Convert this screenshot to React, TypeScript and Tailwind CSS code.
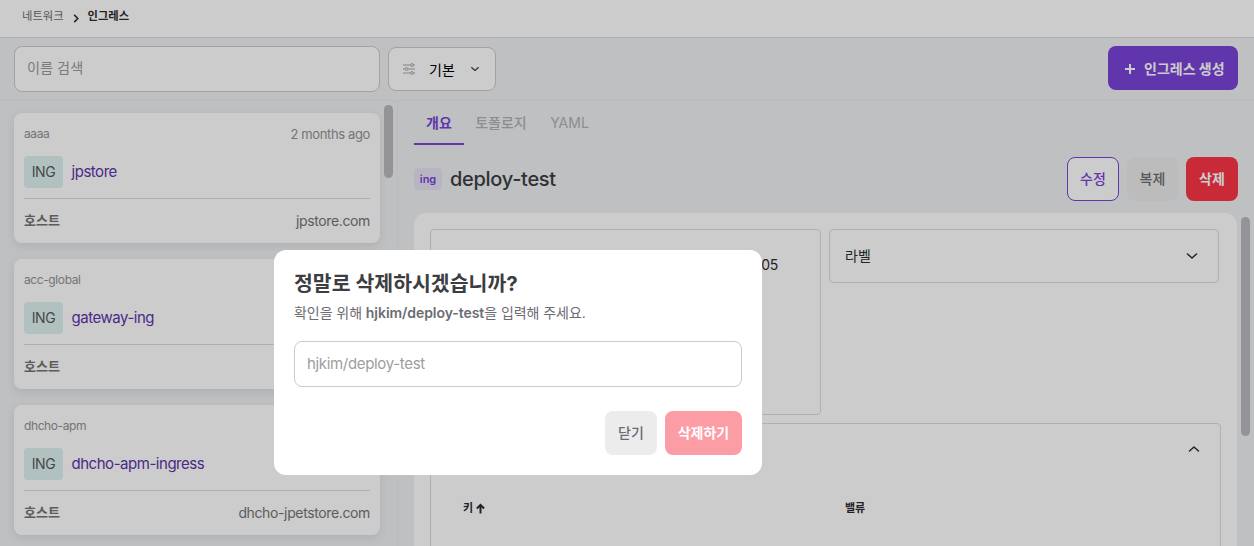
import React from "react";

const ingresses = [
  { namespace: "aaaa", age: "2 months ago", name: "jpstore", host: "jpstore.com" },
  { namespace: "acc-global", age: "", name: "gateway-ing", host: "" },
  { namespace: "dhcho-apm", age: "", name: "dhcho-apm-ingress", host: "dhcho-jpetstore.com" },
];

function Chevron({ className = "" }: { className?: string }) {
  return (
    <svg viewBox="0 0 12 8" className={className} fill="none" stroke="currentColor" strokeWidth="1.5" strokeLinecap="round" strokeLinejoin="round">
      <path d="M1.5 2 L6 6 L10.5 2" />
    </svg>
  );
}

function SlidersIcon() {
  return (
    <svg viewBox="0 0 12 12" className="h-3 w-3 text-[#a8a8ac]" fill="none" stroke="currentColor" strokeWidth="1">
      <path d="M0 2h7.5M10.5 2H12M0 6h2M5 6h7M0 10h7.5M10.5 10H12" />
      <circle cx="9" cy="2" r="1.4" />
      <circle cx="3.5" cy="6" r="1.4" />
      <circle cx="9" cy="10" r="1.4" />
    </svg>
  );
}

function IngressCard({ item }: { item: (typeof ingresses)[number] }) {
  return (
    <article className="h-[130px] w-[366px] shrink-0 rounded-lg bg-white px-2.5 shadow-[0_3px_8px_rgba(60,80,70,0.12)]">
      <div className="flex h-[43px] items-center justify-between text-[#929292]">
        <span className="pb-px text-[12px] tracking-[-0.4px]">{item.namespace}</span>
        <span className="text-[13px] tracking-[-0.37px]">{item.age}</span>
      </div>
      <div className="flex h-8 items-center">
        <span className="flex h-8 w-[39px] items-center justify-center rounded bg-[#def2f1] pb-px text-[14px] tracking-[-0.5px] text-[#58595d]">ING</span>
        <span className="ml-[8.5px] text-[15px] tracking-[-0.47px] text-[#6033aa]">{item.name}</span>
      </div>
      <div className="mt-2.5 flex h-[45px] items-center justify-between border-t border-[#dcdcdc] text-[14px] text-[#747474]">
        <span className="text-[13px] font-bold">호스트</span>
        <span className="pb-px tracking-[-0.37px]">{item.host}</span>
      </div>
    </article>
  );
}

function DeleteDialog() {
  return (
    <div className="fixed inset-0 bg-black/20">
      <section role="dialog" className="absolute top-[250px] left-[274px] flex h-[225px] w-[488px] flex-col rounded-xl bg-white px-5 pt-5">
        <h2 className="h-7 text-[20.5px] leading-7 font-bold text-[#3d3d42]">정말로 삭제하시겠습니까?</h2>
        <p className="mt-[5px] h-5 text-[14px] leading-5 tracking-[-0.06px] text-[#6c6c72]">
          확인을 위해 <b className="font-semibold">hjkim/deploy-test</b>을 입력해 주세요.
        </p>
        <input className="mt-[18px] h-[46px] w-full rounded-lg border border-[#cbcbcf] px-3 pb-0.5 text-[15px] tracking-[-0.33px] outline-none placeholder:text-[#9e9e9e]" placeholder="hjkim/deploy-test" />
        <div className="mt-6 flex justify-end gap-2 text-[14px]">
          <button className="h-11 w-[52px] rounded-lg bg-[#ececec] pb-0.5 font-medium text-[#6c6c72]">닫기</button>
          <button className="h-11 w-[77px] rounded-lg bg-[#fc9ca4] pb-0.5 font-bold text-white">삭제하기</button>
        </div>
      </section>
    </div>
  );
}

export default function App() {
  return (
    <div className="flex h-[546px] w-[1254px] flex-col overflow-hidden bg-[#eff0f3] font-['Inter','Noto_Sans_CJK_KR',sans-serif] text-[#2c2c30]">
      <header className="flex h-[38px] shrink-0 items-center border-b border-[#dcdde0] bg-white px-[22px] pb-[5px] text-[11.3px]">
        <span className="text-[#6c6c72]">네트워크</span>
        <svg viewBox="0 0 6 10" className="mt-1 ml-[9px] h-[9px] w-[6px]" fill="none" stroke="currentColor" strokeWidth="1.7">
          <path d="M1 1 L5 5 L1 9" />
        </svg>
        <span className="ml-[9px] font-bold">인그레스</span>
      </header>

      <div className="flex h-[63px] shrink-0 items-start border-b border-[#e9eaec] pt-2 pr-4 pl-3.5">
        <input className="h-[46px] w-[366px] rounded-lg border border-[#cbcbcf] bg-white px-3 pb-[3px] text-[14.2px] outline-none placeholder:text-[#9a9a9e]" placeholder="이름 검색" />
        <button className="mt-px ml-2 flex h-11 w-[108px] items-center rounded-lg border border-[#cbcbcf] bg-white px-3.5 text-[14px] text-black">
          <SlidersIcon />
          <span className="ml-3.5">기본</span>
          <Chevron className="mr-px ml-auto h-[6px] w-[10px] text-[#3d3d42]" />
        </button>
        <button className="ml-auto flex h-11 w-[130px] items-center rounded-lg bg-[#7a43d6] pl-[17px] text-[14px] font-bold text-white">
          <svg viewBox="0 0 10 10" className="mt-px mr-[9px] h-2.5 w-2.5" stroke="currentColor" strokeWidth="2">
            <path d="M5 0v10M0 5h10" />
          </svg>
          인그레스 생성
        </button>
      </div>

      <main className="flex min-h-0 flex-1">
        <aside className="flex w-[398px] shrink-0 items-start overflow-hidden border-r border-[#e9eaec] pl-3.5">
          <div className="flex flex-col gap-4 pt-3">
            {ingresses.map((item) => (
              <IngressCard key={item.name} item={item} />
            ))}
          </div>
          <div className="mt-1 ml-1 h-[73px] w-[9px] rounded-full bg-[#b9b9bf]" />
        </aside>

        <section className="flex min-w-0 flex-1 flex-col pl-4">
          <nav className="flex h-11 shrink-0 text-[14px] text-[#b0b1b4]">
            <span className="flex w-[50px] items-center justify-center border-b-2 border-[#7a43d6] font-bold text-[#7a43d6]">개요</span>
            <span className="flex w-[74px] items-center justify-center border-b-2 border-transparent font-medium">토폴로지</span>
            <span className="flex w-[63px] items-center justify-center border-b-2 border-transparent">YAML</span>
          </nav>
          <div className="mt-3 flex h-11 shrink-0 items-center pr-4">
            <span className="flex h-[22px] w-7 items-center justify-center rounded-sm bg-[#e8e1f3] text-[11px] font-semibold text-[#7a43d6]">ing</span>
            <h1 className="ml-2 text-[20px] font-medium tracking-[-0.3px] text-[#3d3d42]">deploy-test</h1>
            <div className="ml-auto flex gap-2 text-[14px]">
              <button className="h-11 w-[52px] rounded-lg border border-[#7a43d6] bg-white pb-0.5 font-medium text-[#7a43d6]">수정</button>
              <button className="h-11 w-[51px] rounded-lg bg-[#ebebeb] pb-0.5 font-medium text-[#6c6c72]">복제</button>
              <button className="h-11 w-[52px] rounded-lg bg-[#fa3645] pb-0.5 font-bold text-white">삭제</button>
            </div>
          </div>
          <div className="mt-3 flex min-h-0 flex-1 items-start">
            <div className="h-[333px] w-[823px] shrink-0 overflow-hidden rounded-t-xl bg-white px-4 pt-4">
              <div className="flex items-start gap-2">
                <div className="h-[186px] w-[391px] rounded border border-[#dcdcdc] pt-[25px] pr-[42px] text-right text-[14px] leading-5 tracking-[-0.3px]">05</div>
                <div className="flex h-[54px] w-[390px] items-center justify-between rounded border border-[#dcdcdc] pr-4 pl-[15px] text-[14px]">
                  <span className="pb-0.5">라벨</span>
                  <Chevron className="mr-1 h-2 w-3" />
                </div>
              </div>
              <div className="mt-2 h-[140px] w-[791px] rounded-t border border-[#dcdcdc]">
                <div className="flex h-[52px] items-center justify-end pr-5 pb-0.5">
                  <Chevron className="h-2 w-3 rotate-180" />
                </div>
                <div className="flex h-[66px] items-center pb-px pl-8 text-[11px] font-bold">
                  <div className="flex w-[382px] items-center">
                    키
                    <svg viewBox="0 0 10 11" className="ml-[3px] h-[11px] w-[9px]" fill="none" stroke="currentColor" strokeWidth="2.2">
                      <path d="M5 11V1.5M1 5.5l4-4 4 4" />
                    </svg>
                  </div>
                  <span>밸류</span>
                </div>
              </div>
            </div>
            <div className="mt-1 ml-1 h-[219px] w-[9px] rounded-full bg-[#b9b9bf]" />
          </div>
        </section>
      </main>
      <DeleteDialog />
    </div>
  );
}
